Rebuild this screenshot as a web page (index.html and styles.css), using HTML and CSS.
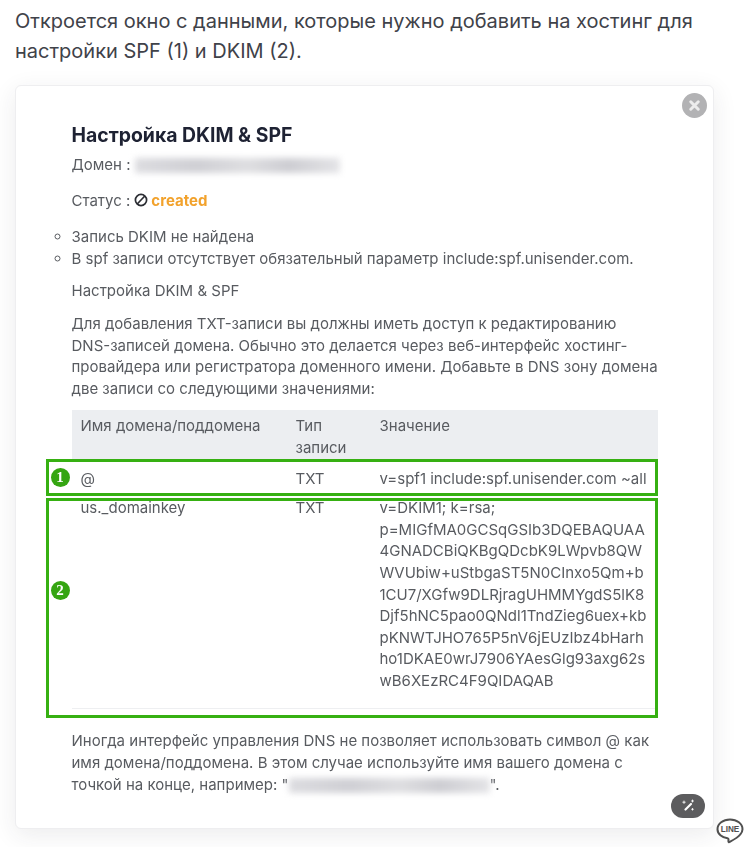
FILE: index.html
```html
<!DOCTYPE html>
<html lang="ru">
<head>
<meta charset="utf-8">
<title>Настройка DKIM &amp; SPF</title>
<link rel="stylesheet" href="styles.css">
</head>
<body>
<p class="intro">Откроется окно с данными, которые нужно добавить на хостинг для настройки SPF (1) и DKIM (2).</p>
<figure class="card">
  <div class="shot">
    <h2 class="title">Настройка DKIM &amp; SPF</h2>
    <p class="domain">Домен : <span class="redact redact-domain"></span></p>
    <p class="status">Статус :
      <svg class="ban" viewBox="0 0 14 14" aria-hidden="true"><circle cx="7" cy="7" r="5.600"/><path d="M3.200 11 10.800 3"/></svg>
      <b class="created">created</b></p>
    <ul class="issues">
      <li>Запись DKIM не найдена</li>
      <li>В spf записи отсутствует обязательный параметр include:spf.unisender.com.</li>
    </ul>
    <p class="sub">Настройка DKIM &amp; SPF</p>
    <p class="para">Для добавления TXT-записи вы должны иметь доступ к редактированию DNS-записей домена. Обычно это делается через веб-интерфейс хостинг-провайдера или регистратора доменного имени. Добавьте в DNS зону домена две записи со следующими значениями:</p>
    <div class="table-wrap">
      <table class="dns">
        <colgroup><col class="c1"><col class="c2"><col class="c3"></colgroup>
        <thead>
          <tr><th>Имя домена/поддомена</th><th>Тип записи</th><th>Значение</th></tr>
        </thead>
        <tbody>
          <tr class="row-spf"><td>@</td><td>TXT</td><td class="nowrap">v=spf1 include:spf.unisender.com ~all</td></tr>
          <tr class="row-dkim"><td>us._domainkey</td><td>TXT</td><td class="nowrap">v=DKIM1; k=rsa;<br>p=MIGfMA0GCSqGSIb3DQEBAQUAA<br>4GNADCBiQKBgQDcbK9LWpvb8QW<br>WVUbiw+uStbgaST5N0CInxo5Qm+b<br>1CU7/XGfw9DLRjragUHMMYgdS5lK8<br>Djf5hNC5pao0QNdl1TndZieg6uex+kb<br>pKNWTJHO765P5nV6jEUzIbz4bHarh<br>ho1DKAE0wrJ7906YAesGlg93axg62s<br>wB6XEzRC4F9QIDAQAB</td></tr>
        </tbody>
      </table>
      <div class="mark mark-1"><span class="num">1</span></div>
      <div class="mark mark-2"><span class="num">2</span></div>
    </div>
    <p class="foot">Иногда интерфейс управления DNS не позволяет использовать символ @ как имя домена/поддомена. В этом случае используйте имя вашего домена с точкой на конце, например: "<span class="redact redact-foot"></span>".</p>
  </div>
  <button class="close" type="button" aria-label="Закрыть">
    <svg viewBox="0 0 12 12" aria-hidden="true"><path d="M3 3 9 9M9 3 3 9"/></svg>
  </button>
  <button class="wand" type="button" aria-label="Улучшить">
    <svg viewBox="0 0 16 16" aria-hidden="true">
      <path class="stick" d="M5.500 11.500 11 6"/>
      <path class="spark" d="M4 3v2.400M2.800 4.200h2.400M12.500 2v2M11.500 3h2M12.500 10.500v1.600M11.700 11.300h1.600"/>
    </svg>
  </button>
</figure>
<svg class="line" viewBox="0 0 28 26" aria-label="LINE">
  <path class="bubble" d="M14 1.500C7 1.500 1.500 5.800 1.500 11.200c0 4.700 4.400 8.300 10 9 .7.100 1 .4 1 1l-.1 2.100c0 .8.500 1.100 1.200.7 1.800-1 8-4.200 10.600-7.500 1.500-1.600 2.300-3.300 2.300-5.300C26.500 5.800 21 1.500 14 1.500Z"/>
  <text x="14" y="14.300" text-anchor="middle">LINE</text>
</svg>
</body>
</html>
```
FILE: styles.css
```css
* { box-sizing: border-box; }
html, body { margin: 0; height: 847px; overflow: hidden; }
body {
  position: relative;
  background: #fff;
  color: #3b3f46;
  font-family: Inter, "Noto Sans", sans-serif;
}
.intro {
  margin: 0;
  padding: 6px 40px 0 15px;
  font-size: 20px;
  line-height: 30px;
  color: #3f4249;
}
.card {
  position: relative;
  margin: 19px 32px 0 15px;
  width: 699px;
  height: 744px;
  background: #fff;
  border: 1px solid #eeeef0;
  border-radius: 6px;
  box-shadow: 0 6px 24px rgba(40, 40, 60, 0.09);
}
.shot {
  padding: 36px 55px 0 55.500px;
  font-size: 15px;
  line-height: 21.600px;
  color: #585b60;
  filter: blur(0.4px);
}
.title {
  margin: 0;
  font-size: 19.400px;
  line-height: 26px;
  font-weight: 700;
  color: #1e2233;
}
.domain { margin: 6px 0 0; }
.status { margin: 14px 0 0; display: flex; align-items: center; gap: 4px; }
.ban { width: 14px; height: 14px; fill: none; stroke: #2b2d33; stroke-width: 1.700; }
.created { color: #f2a22c; font-weight: 700; margin-left: -1px; }
.redact {
  display: inline-block;
  background: linear-gradient(90deg, #dcdce0, #cfcfd4 30%, #dedee1 55%, #cdcdd2 75%, #e4e4e7);
  filter: blur(3px);
  vertical-align: middle;
}
.redact-domain { width: 205px; height: 15px; }
.redact-foot { width: 201px; height: 15px; }
.issues { margin: 15px 0 0; padding: 0; list-style: circle; }
.sub { margin: 11px 0 0; }
.para { margin: 11px 0 0; }
.table-wrap { position: relative; margin-top: 11px; }
.dns {
  width: 586px;
  table-layout: fixed;
  border-collapse: collapse;
  border-bottom: 1px solid #eeeff1;
}
.c1 { width: 215px; }
.c2 { width: 84px; }
.dns th, .dns td {
  padding: 0 9px;
  text-align: left;
  font-weight: 400;
  vertical-align: top;
}
.dns thead tr { background: #eceef1; }
.dns th { padding-top: 5px; padding-bottom: 0; }
.row-spf td { padding-top: 9px; padding-bottom: 8px; }
.row-dkim td { padding-top: 0; padding-bottom: 17px; }
.nowrap { white-space: nowrap; }
.mark {
  position: absolute;
  left: -26px;
  width: 612px;
  border: 3px solid #36b012;
}
.mark-1 { top: 49px; height: 37px; }
.mark-2 { top: 88px; height: 220px; }
.num {
  position: absolute;
  left: 2px;
  width: 19px;
  height: 19px;
  border-radius: 50%;
  background: #35a512;
  color: #fff;
  font: 700 15px/19px "Liberation Serif", serif;
  text-align: center;
}
.mark-1 .num { top: 6px; }
.mark-2 .num { top: 80px; }
.foot { margin: 21px 0 0; }
.close {
  position: absolute;
  top: 7px;
  right: 6px;
  width: 25px;
  height: 25px;
  padding: 5px;
  border: 0;
  border-radius: 50%;
  background: #b2b2b4;
  display: flex;
}
.close svg { width: 15px; height: 15px; fill: none; stroke: #ececec; stroke-width: 2.400; stroke-linecap: round; filter: blur(0.4px); }
.wand {
  position: absolute;
  right: 8px;
  bottom: 10px;
  width: 34px;
  height: 24px;
  padding: 4px 9px;
  border: 0;
  border-radius: 12px;
  background: #5c5c5e;
  display: flex;
}
.wand svg { width: 16px; height: 16px; fill: none; stroke: #fff; stroke-linecap: round; }
.stick { stroke-width: 2.200; }
.spark { stroke-width: 0.900; }
.line {
  position: absolute;
  left: 716px;
  top: 818px;
  width: 28px;
  height: 26px;
}
.bubble { fill: #fff; stroke: #505050; stroke-width: 2; stroke-linejoin: round; }
.line text {
  font: 700 8.200px "Liberation Sans", sans-serif;
  fill: #505050;
}
```
